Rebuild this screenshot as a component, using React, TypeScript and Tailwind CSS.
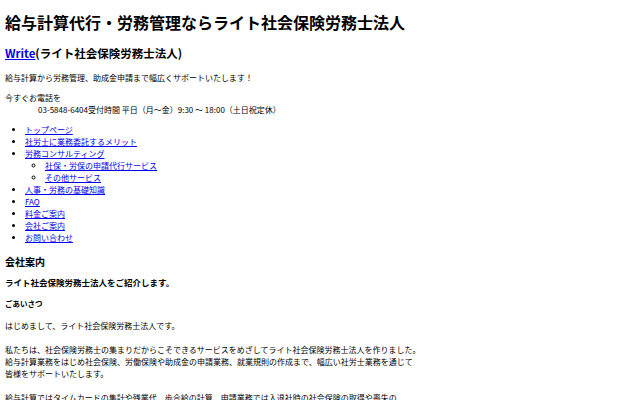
import React from "react";

const navItems: { label: string; children?: string[] }[] = [
  { label: "トップページ" },
  { label: "社労士に業務委託するメリット" },
  {
    label: "労務コンサルティング",
    children: ["社保・労保の申請代行サービス", "その他サービス"],
  },
  { label: "人事・労務の基礎知識" },
  { label: "FAQ" },
  { label: "料金ご案内" },
  { label: "会社ご案内" },
  { label: "お問い合わせ" },
];

const linkCls = "text-[#0000ee] underline";

export default function App() {
  return (
    <div
      className="min-h-[400px] bg-white px-[5px] text-[8px] leading-[12px] text-black"
      style={{ fontFamily: '"Noto Sans CJK JP", "Noto Sans", sans-serif' }}
    >
      <h1 className="pt-[12px] text-[16px] leading-[20px] font-bold">
        給与計算代行・労務管理ならライト社会保険労務士法人
      </h1>

      <h2 className="mt-[12px] text-[11.5px] leading-[18px] font-bold">
        <a href="#" className={linkCls}>
          Write
        </a>
        (ライト社会保険労務士法人)
      </h2>

      <p className="mt-[10px]">給与計算から労務管理、助成金申請まで幅広くサポートいたします！</p>

      <dl className="mt-[8px]">
        <dt>今すぐお電話を</dt>
        <dd className="ml-[33px]">03-5848-6404受付時間 平日（月～金）9:30 ～ 18:00（土日祝定休）</dd>
      </dl>

      <ul className="mt-[8px] list-disc pl-[20px]">
        {navItems.map((item) => (
          <li key={item.label}>
            <a href="#" className={linkCls}>
              {item.label}
            </a>
            {item.children && (
              <ul className="list-[circle] pl-[20px]">
                {item.children.map((c) => (
                  <li key={c}>
                    <a href="#" className={linkCls}>
                      {c}
                    </a>
                  </li>
                ))}
              </ul>
            )}
          </li>
        ))}
      </ul>

      <h2 className="mt-[11px] text-[10px] leading-[14px] font-bold">会社案内</h2>
      <h3 className="mt-[7px] text-[8.5px] leading-[12px] font-bold">
        ライト社会保険労務士法人をご紹介します。
      </h3>
      <h4 className="mt-[10px] text-[7.5px] leading-[12px] font-bold">ごあいさつ</h4>
      <p className="mt-[10px]">はじめまして、ライト社会保険労務士法人です。</p>
      <p className="mt-[12px]">
        私たちは、社会保険労務士の集まりだからこそできるサービスをめざしてライト社会保険労務士法人を作りました。
        <br />
        給与計算業務をはじめ社会保険、労働保険や助成金の申請業務、就業規則の作成まで、幅広い社労士業務を通じて
        <br />
        皆様をサポートいたします。
      </p>
      <p className="mt-[12px]">
        給与計算ではタイムカードの集計や残業代、歩合給の計算、申請業務では入退社時の社会保険の取得や喪失の
      </p>
    </div>
  );
}
